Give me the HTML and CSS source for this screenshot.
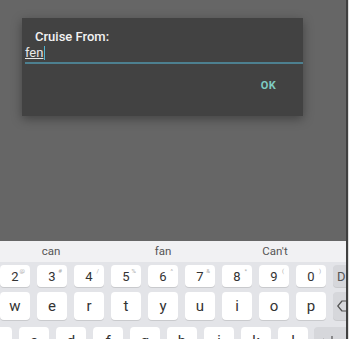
FILE: index.html
```html
<!DOCTYPE html>
<html lang="en">
<head>
  <meta charset="UTF-8" />
  <title>Cruise From</title>
  <link rel="stylesheet" href="styles.css">
</head>
<body>
  <div class="screen">
    <div class="dialog">
      <div class="dialog-title">Cruise From:</div>
      <div class="field">
        <span class="typed">fen</span><span class="caret"></span>
      </div>
      <div class="actions">
        <span class="ok">OK</span>
      </div>
    </div>

    <div class="keyboard">
      <div class="suggest">
        <span>can</span>
        <span>fan</span>
        <span>Can't</span>
      </div>
      <div class="keys">
        <div class="row nums">
          <div class="key">2<sup>@</sup></div>
          <div class="key">3<sup>#</sup></div>
          <div class="key">4<sup>/</sup></div>
          <div class="key">5<sup>%</sup></div>
          <div class="key">6<sup>^</sup></div>
          <div class="key">7<sup>&amp;</sup></div>
          <div class="key">8<sup>*</sup></div>
          <div class="key">9<sup>(</sup></div>
          <div class="key">0<sup>)</sup></div>
          <div class="key fn">D</div>
        </div>
        <div class="row">
          <div class="key">w</div>
          <div class="key">e</div>
          <div class="key">r</div>
          <div class="key">t</div>
          <div class="key">y</div>
          <div class="key">u</div>
          <div class="key">i</div>
          <div class="key">o</div>
          <div class="key">p</div>
          <div class="key fn">
            <svg width="16" height="12" viewBox="0 0 16 12"><path d="M5 1h9.5v10H5L0.8 6z" fill="none" stroke="#555" stroke-width="1.2" stroke-linejoin="round"/></svg>
          </div>
        </div>
        <div class="row third">
          <div class="key part">a</div>
          <div class="key">s</div>
          <div class="key">d</div>
          <div class="key">f</div>
          <div class="key">g</div>
          <div class="key">h</div>
          <div class="key">j</div>
          <div class="key">k</div>
          <div class="key">l</div>
          <div class="key fn wide">
            <svg width="16" height="12" viewBox="0 0 16 12"><path d="M14 1v6H3M6 4L3 7l3 3" fill="none" stroke="#555" stroke-width="1.2"/></svg>
          </div>
        </div>
      </div>
    </div>
  </div>
</body>
</html>
```

FILE: styles.css
```css
body { margin: 0; background: #fff; font-family: Roboto, "Liberation Sans", sans-serif; }

.screen {
  width: 346px;
  height: 339px;
  background: #666;
  box-shadow: 1px 1px 1px 1px rgba(0, 0, 0, .75);
  overflow: hidden;
  display: flex;
  flex-direction: column;
}

.dialog {
  margin: 18px 0 0 22px;
  width: 281px;
  height: 98px;
  background: #424242;
  box-shadow: 0 3px 10px rgba(0, 0, 0, .35);
  display: flex;
  flex-direction: column;
}
.dialog-title { padding: 11px 0 0 13px; font-size: 13px; font-weight: 500; line-height: 16px; color: #f2f2f2; }
.field {
  margin: 1px 0 0 3px;
  height: 14px;
  padding-bottom: 2px;
  border-bottom: 2px solid #4d8090;
  display: flex;
  align-items: flex-end;
}
.typed { font-size: 13px; line-height: 14px; color: #e8e8e8; text-decoration: underline; text-underline-offset: 1px; }
.caret { width: 1px; height: 14px; margin-left: 1px; background: #4fb3d0; }
.actions { display: flex; justify-content: flex-end; padding: 15px 27px 0 0; }
.ok { font-size: 11px; font-weight: 700; color: #7ecbc2; letter-spacing: .3px; }

.keyboard { margin-top: auto; height: 98px; background: #e3e4e8; }
.suggest {
  height: 21px;
  background: #f1f1f3;
  display: flex;
  margin-left: -5px;
  font-size: 11.5px;
  color: #555;
  line-height: 21px;
}
.suggest span { width: 112px; text-align: center; }

.keys { padding-top: 3px; display: flex; flex-direction: column; gap: 5px; }
.row { display: flex; gap: 7px; }
.row.third { margin-top: 2px; gap: 7px; margin-left: -18px; }
.key {
  flex: none;
  width: 30px;
  height: 28px;
  background: #fff;
  border-radius: 4px;
  box-shadow: 0 1px 0 #c9cacd;
  display: flex;
  align-items: center;
  justify-content: center;
  font-size: 15px;
  color: #333;
  position: relative;
}
.nums .key { height: 22px; font-size: 13px; }
.nums .key sup { position: absolute; top: 2px; right: 5px; font-size: 6px; color: #aaa; }
.key.fn { background: #d6d7db; color: #555; justify-content: flex-start; padding-left: 4px; box-sizing: border-box; }
.key.wide { width: 60px; margin-left: -1px; }
```
